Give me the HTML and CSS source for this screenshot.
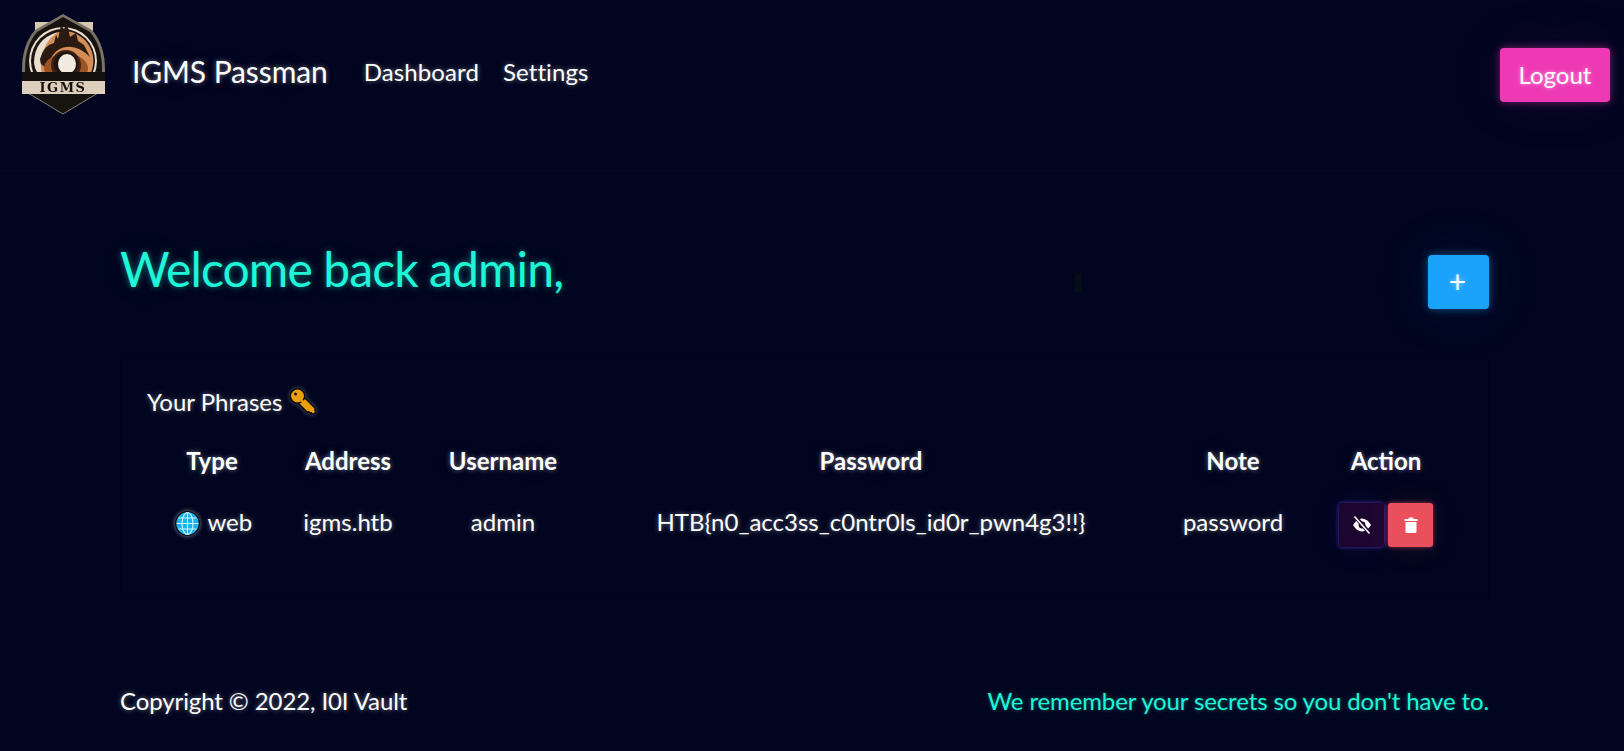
FILE: index.html
```html
<!DOCTYPE html>
<html lang="en">
<head>
  <meta charset="UTF-8" />
  <title>IGMS Passman</title>
  <link rel="stylesheet" href="styles.css">
</head>
<body>
  <nav class="navbar">
    <svg class="logo" viewBox="0 0 86 102" aria-label="IGMS logo">
      <path d="M15 9H73V70H15Z" fill="#d9c8b0"/>
      <path d="M43 1L72 17Q85 32 85 56V70H2V56Q2 32 15 17Z" fill="#7a7167"/>
      <path d="M43 4L70 19Q82 33 82 56V70H5V56Q5 33 17 19Z" fill="#17130f"/>
      <circle cx="43" cy="48" r="34" fill="#e9dfd1"/>
      <circle cx="43" cy="48" r="32" fill="#1d1410"/>
      <path d="M43 18A30 30 0 1 1 21 68Q10 40 30 24Q36 19 43 18Z" fill="#d48e55"/>
      <path d="M14 50Q14 26 38 19Q24 28 21 46Q20 60 24 66Q15 60 14 50Z" fill="#e9dfd1"/>
      <path d="M20 46Q24 32 34 30L36 22L38 26L41 12L44 16L47 10L50 24L56 20L58 28L64 32L70 44Q58 32 46 34Q32 36 28 54Q20 54 20 46Z" fill="#2a1a12"/>
      <ellipse cx="46" cy="55" rx="22" ry="14" fill="#9a5426"/>
      <ellipse cx="46" cy="52" rx="15" ry="15" fill="#3b2114"/>
      <ellipse cx="46" cy="51" rx="12" ry="12" fill="#1f130e"/>
      <ellipse cx="47" cy="51" rx="9" ry="10" fill="#f2ebdf"/>
      <path d="M8 80H78L43 101Z" fill="#17130f" stroke="#8a8074"/>
      <rect x="2" y="59" width="83" height="9" fill="#15110e"/>
      <rect x="2" y="68" width="83" height="13" fill="#ddcfbc"/>
      <text class="logo-text" x="43" y="79" text-anchor="middle">IGMS</text>
    </svg>
    <a class="brand" href="#">IGMS Passman</a>
    <a class="nav-link" href="#">Dashboard</a>
    <a class="nav-link" href="#">Settings</a>
    <button class="btn btn-logout">Logout</button>
  </nav>

  <main class="content">
    <div class="welcome-row">
      <h1>Welcome back admin,</h1>
      <span class="cursor-mark"></span>
      <button class="btn btn-add">+</button>
    </div>

    <section class="phrases">
      <h2>Your Phrases
        <svg class="emoji" viewBox="0 0 27 27">
          <path d="M14 8L26 20V25.5H23.5L22.5 24.5L21.5 25.5L19.5 23.5L18.5 24.5L9 15Z" fill="#eb9f0b" stroke="#0b0b0b" stroke-width="1.5" stroke-linejoin="round"/>
          <circle cx="8.5" cy="8" r="7.2" fill="#eb9f0b" stroke="#0b0b0b" stroke-width="1.5"/>
          <path d="M11 11L25 24.5" stroke="#eb9f0b" stroke-width="2.5"/>
          <circle cx="6.5" cy="6" r="1.5" fill="#151515"/>
        </svg>
      </h2>
      <table>
        <thead>
          <tr>
            <th class="col-type">Type</th>
            <th class="col-address">Address</th>
            <th class="col-username">Username</th>
            <th class="col-password">Password</th>
            <th class="col-note">Note</th>
            <th class="col-action">Action</th>
          </tr>
        </thead>
        <tbody>
          <tr>
            <td>
              <svg class="globe" viewBox="0 0 25 25">
                <circle cx="12.5" cy="12.5" r="11.8" fill="#19b4ec" stroke="#0a0a0a" stroke-width="1.3"/>
                <g fill="none" stroke="#d6f3fd" stroke-width="1.1">
                  <ellipse cx="12.5" cy="12.5" rx="5.5" ry="11"/>
                  <path d="M12.5 1.5V23.5M1.5 12.5H23.5M3.5 7H21.5M3.5 18H21.5"/>
                </g>
              </svg>
              web
            </td>
            <td>igms.htb</td>
            <td>admin</td>
            <td>HTB{n0_acc3ss_c0ntr0ls_id0r_pwn4g3!!}</td>
            <td>password</td>
            <td>
              <div class="actions">
                <button class="icon-btn btn-eye">
                  <svg viewBox="0 0 20 20" width="20" height="20">
                    <path d="M1 10Q5 3.5 10 3.5T19 10Q15 16.5 10 16.5T1 10Z" fill="#fff"/>
                    <circle cx="10" cy="10" r="3.4" fill="#1c0630"/>
                    <path d="M3 1.5L17.5 18" stroke="#1c0630" stroke-width="4"/>
                    <path d="M2.5 1.5L17.5 18.5" stroke="#fff" stroke-width="1.6"/>
                  </svg>
                </button>
                <button class="icon-btn btn-trash">
                  <svg viewBox="0 0 20 20" width="20" height="20">
                    <path d="M3.5 4H7.5L8 2.5H12L12.5 4H16.5V6H3.5Z" fill="#fff"/>
                    <path d="M4.5 7H15.5V16.5Q15.5 18 14 18H6Q4.5 18 4.5 16.5Z" fill="#fff"/>
                  </svg>
                </button>
              </div>
            </td>
          </tr>
        </tbody>
      </table>
    </section>
  </main>

  <footer class="footer">
    <span class="copyright">Copyright © 2022, I0I Vault</span>
    <span class="tagline">We remember your secrets so you don't have to.</span>
  </footer>
</body>
</html>
```

FILE: styles.css
```css
body {
  margin: 0;
  height: 751px;
  overflow: hidden;
  background-color: #01051f;
  color: #fff;
  font-family: Lato, "Open Sans", sans-serif;
  text-shadow: 0 0 5px rgba(255, 255, 255, 0.45), 0 0 40px rgba(90, 130, 255, 0.12);
}

.navbar {
  display: flex;
  align-items: center;
  height: 171px;
  box-sizing: border-box;
  padding: 0 14px 22px 20px;
  border-bottom: 1px solid #0c0420;
}
.logo {
  width: 86px;
  height: 102px;
  margin-top: -20px;
  filter: blur(0.3px);
}
.logo-text {
  font-family: "DejaVu Serif", serif;
  font-weight: 700;
  font-size: 13px;
  letter-spacing: 1.5px;
  fill: #15110e;
  text-shadow: none;
}
.brand {
  margin: -6px 36px 0 26px;
  font-size: 30px;
  letter-spacing: -0.1px;
  color: #fff;
  text-decoration: none;
}
.nav-link {
  margin: -6px 24px 0 0;
  font-size: 24px;
  letter-spacing: 0.1px;
  color: #fff;
  text-decoration: none;
}

.btn {
  border: 0;
  border-radius: 4px;
  color: #fff;
  font-family: inherit;
  font-size: 24px;
  text-shadow: 0 0 4px rgba(255, 255, 255, 0.5);
}
.btn-logout {
  margin-left: auto;
  width: 110px;
  height: 54px;
  margin-top: 2px;
  padding: 0 0 2px;
  background-color: #ee39b5;
  box-shadow: 0 0 8px rgba(238, 57, 181, 0.5), 0 0 60px rgba(238, 57, 181, 0.08);
}
.btn-add {
  width: 61px;
  height: 54px;
  padding: 0 2px 2px 0;
  font-size: 30px;
  background-color: #1ba2fa;
  box-shadow: 0 0 8px rgba(27, 162, 250, 0.5), 0 0 60px rgba(27, 162, 250, 0.1);
}

.content {
  padding: 0 135px 0 120px;
}
.welcome-row {
  position: relative;
  display: flex;
  justify-content: space-between;
  align-items: flex-start;
  padding-top: 84px;
  height: 187px;
  box-sizing: border-box;
}
.welcome-row h1 {
  margin: -15px 0 0;
  font-size: 48px;
  font-weight: 400;
  letter-spacing: -0.9px;
  color: #1ff5d8;
  text-shadow: 0 0 6px rgba(31, 245, 216, 0.5), 0 0 40px rgba(31, 245, 216, 0.08);
}
.cursor-mark {
  position: absolute;
  left: 955px;
  top: 103px;
  width: 6px;
  height: 18px;
  background-color: #040f14;
}

.phrases {
  height: 242px;
  box-sizing: border-box;
  padding: 28px 27px 0 26px;
  border: 1px solid #020316;
}
.phrases h2 {
  display: flex;
  align-items: center;
  gap: 7px;
  margin: 0;
  font-size: 24px;
  font-weight: 400;
}
.emoji {
  width: 27px;
  height: 27px;
  filter: drop-shadow(0 0 2px rgba(255, 255, 255, 0.35));
}
.globe {
  width: 25px;
  height: 25px;
  margin: 0 2px 0 3px;
  vertical-align: -5px;
  filter: drop-shadow(0 0 2px rgba(255, 255, 255, 0.5));
}

table {
  width: 100%;
  margin-top: 23px;
  border-collapse: collapse;
  table-layout: fixed;
}
th, td {
  padding: 0;
  font-size: 24px;
  text-align: center;
  white-space: nowrap;
}
th {
  height: 43px;
  font-weight: 700;
}
td {
  height: 78px;
}
.col-type { width: 130px; }
.col-address { width: 142px; }
.col-username { width: 168px; }
.col-password { width: 568px; }
.col-note { width: 156px; }
.col-action { width: auto; }

.actions {
  display: flex;
  justify-content: center;
  gap: 4px;
  margin-top: 8px;
}
.icon-btn {
  display: flex;
  align-items: center;
  justify-content: center;
  width: 45px;
  height: 44px;
  padding: 0;
  border-radius: 3px;
  border: 0;
}
.btn-eye {
  background-color: #1c0630;
  box-shadow: 0 0 4px rgba(100, 60, 220, 0.8), 0 0 30px rgba(100, 60, 220, 0.1);
}
.btn-trash {
  background-color: #ea4f5c;
  box-shadow: 0 0 5px rgba(234, 79, 92, 0.6), 0 0 30px rgba(234, 79, 92, 0.12);
}

.footer {
  display: flex;
  justify-content: space-between;
  margin-top: 86px;
  padding: 0 135px 0 120px;
  font-size: 24px;
}
.copyright {
  letter-spacing: -0.1px;
}
.tagline {
  letter-spacing: -0.13px;
  color: #1ff5d8;
  text-shadow: 0 0 4px rgba(31, 245, 216, 0.4);
}
```
